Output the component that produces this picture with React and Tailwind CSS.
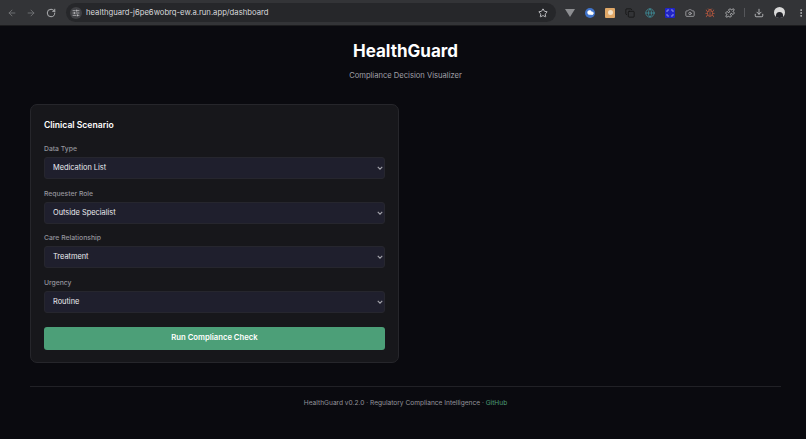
import { ArrowLeft, ArrowRight, RotateCw, SlidersHorizontal, Star, Puzzle, Download, EllipsisVertical, Camera, Copy, Cloud, Bug, Maximize, Globe } from "lucide-react"

const fields = [
  { label: "Data Type", value: "Medication List" },
  { label: "Requester Role", value: "Outside Specialist" },
  { label: "Care Relationship", value: "Treatment" },
  { label: "Urgency", value: "Routine" },
]

function Toolbar() {
  return (
    <div className="flex items-center h-[26px] bg-[#333437] border-b border-[#1c1c1e] pl-[7px]">
      <ArrowLeft className="w-[10px] h-[10px] text-[#77787b]" />
      <ArrowRight className="w-[10px] h-[10px] text-[#77787b] ml-[9px]" />
      <RotateCw className="w-[10px] h-[10px] text-[#c4c5c8] ml-[10px]" />
      <div className="flex items-center w-[490px] h-[19px] ml-[10px] rounded-full bg-[#26272a] pl-[4px] pr-[8px]">
        <span className="flex items-center justify-center w-[12px] h-[12px] rounded-full bg-[#404145]">
          <SlidersHorizontal className="w-[8px] h-[8px] text-[#d5d5d8]" />
        </span>
        <span className="ml-[4px] text-[7.7px] text-[#d8d9dc]">healthguard-j6pe6wobrq-ew.a.run.app/dashboard</span>
        <Star className="w-[10px] h-[10px] text-[#d8d9dc] ml-auto" />
      </div>
      <div className="flex items-center ml-[9px] gap-[10px]">
        <svg viewBox="0 0 10 10" className="w-[10px] h-[10px]"><path d="M0 1h10L5 9z" fill="#8d8e91" /></svg>
        <span className="flex items-center justify-center w-[10px] h-[10px] rounded-full bg-[#3f73c9]"><Cloud className="w-[7px] h-[7px] text-white" fill="white" /></span>
        <span className="flex items-center justify-center w-[10px] h-[10px] bg-[#e0a868] rounded-[1px]"><span className="w-[5px] h-[5px] rounded-full bg-[#f3e2c8]" /></span>
        <Copy className="w-[10px] h-[10px] text-[#151515]" />
        <Globe className="w-[10px] h-[10px] text-[#3f8c98]" />
        <span className="flex items-center justify-center w-[10px] h-[10px] bg-[#2024c8] rounded-[1px]"><Maximize className="w-[8px] h-[8px] text-[#c8d0ff]" /></span>
        <Camera className="w-[10px] h-[10px] text-[#a9aaad]" />
        <Bug className="w-[10px] h-[10px] text-[#b5573f]" />
        <Puzzle className="w-[10px] h-[10px] text-[#c4c5c8]" />
      </div>
      <span className="w-px h-[9px] bg-[#55565a] ml-[9px]" />
      <Download className="w-[10px] h-[10px] text-[#c4c5c8] ml-[9px]" />
      <span className="flex items-end justify-center w-[11px] h-[11px] rounded-full overflow-hidden bg-[#d9d9d9] ml-[10px]">
        <span className="w-[7px] h-[6px] rounded-t-full bg-[#23242a]" />
      </span>
      <EllipsisVertical className="w-[10px] h-[10px] text-[#c4c5c8] ml-[11px]" />
    </div>
  )
}

export default function App() {
  return (
    <div className="w-[806px] h-[439px] overflow-hidden flex flex-col bg-[#0a0a0f] font-['Inter',sans-serif] antialiased">
      <Toolbar />
      <div className="flex-1 pl-[30px] pr-[25px]">
        <div className="text-center pt-[13px]">
          <h1 className="text-[17px] leading-[24px] font-bold text-white">HealthGuard</h1>
          <p className="mt-[7px] text-[7.6px] leading-[12px] text-[#a0a0a8]">Compliance Decision Visualizer</p>
        </div>

        <div className="w-[369px] h-[259px] mt-[22px] rounded-[7px] border border-[#26262b] bg-[#17171b] px-[13px] pt-[14px]">
          <h2 className="text-[8.6px] leading-[13px] font-semibold text-white">Clinical Scenario</h2>
          <div className="flex flex-col gap-[9.5px] mt-[12px]">
            {fields.map((f) => (
              <div key={f.label}>
                <div className="text-[6.8px] leading-[10px] font-medium text-[#94949c] mb-[3px]">{f.label}</div>
                <div className="flex items-center justify-between h-[22px] rounded-[3px] border border-[#26262e] bg-[#1f1f2d] pl-[8px] pr-[1px] text-[7.4px] text-[#ececf0]">
                  {f.value}
                  <svg viewBox="0 0 8 8" className="w-[6px] h-[6px] text-[#a4a4ac]">
                    <path d="M1 2.5 4 5.5 7 2.5" fill="none" stroke="currentColor" strokeWidth="1.5" />
                  </svg>
                </div>
              </div>
            ))}
          </div>
          <button className="w-full h-[23px] mt-[14px] rounded-[3px] bg-[#4c9f78] text-[7.7px] font-semibold text-white">
            Run Compliance Check
          </button>
        </div>

        <footer className="mt-[23px] border-t border-[#212126] pt-[11px] text-center text-[6.6px] leading-[10px] text-[#94949c]">
          HealthGuard v0.2.0 · Regulatory Compliance Intelligence · <a className="text-[#4c9f78]">GitHub</a>
        </footer>
      </div>
    </div>
  )
}
